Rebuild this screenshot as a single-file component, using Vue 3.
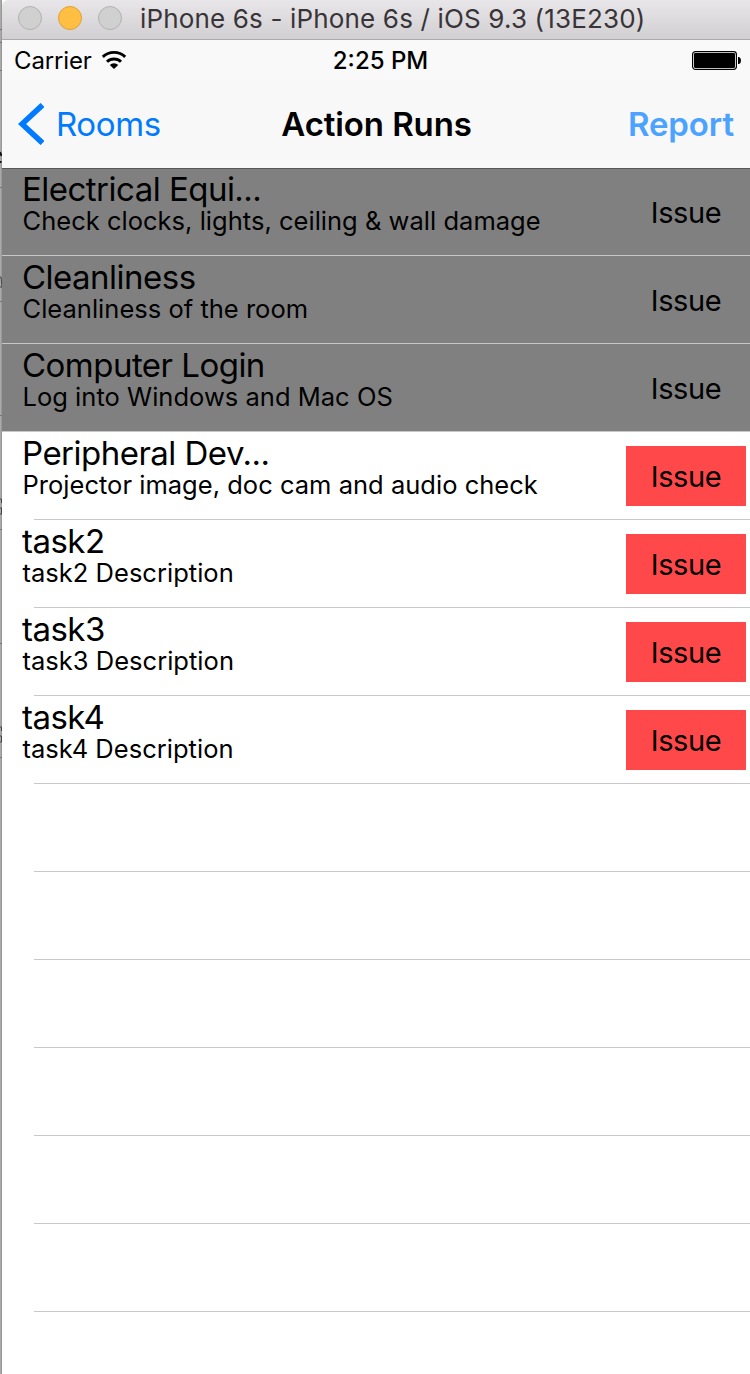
<script setup>
const tasks = [
  { title: 'Electrical Equi...', desc: 'Check clocks, lights, ceiling & wall damage', done: true },
  { title: 'Cleanliness', desc: 'Cleanliness of the room', done: true },
  { title: 'Computer Login', desc: 'Log into Windows and Mac OS', done: true },
  { title: 'Peripheral Dev...', desc: 'Projector image, doc cam and audio check', done: false },
  { title: 'task2', desc: 'task2 Description', done: false },
  { title: 'task3', desc: 'task3 Description', done: false },
  { title: 'task4', desc: 'task4 Description', done: false },
]
const emptyRows = 6
</script>

<template>
  <div class="screen">
    <div class="edge">
      <svg width="2" height="1374" viewBox="0 0 2 1374">
        <path d="M0 29.5h2M0 42.5h2M0 70.5h2M0 187.5h2M0 301.5h2M0 415.5h2M0 529.5h2M0 643.5h2M0 757.5h2" stroke="#777" />
        <path d="M0 152l1.500 4M0 162h1.500" stroke="#111" stroke-width="2" />
        <path d="M0 277h1l1 10h-2M0 499h1.500v4M0 508h1.500v6h-1.500M0 727h1.500v4M0 736h1.500v6h-1.500" stroke="#444" fill="none" />
      </svg>
    </div>
    <div class="window">
      <div class="titlebar">
        <i class="light"></i><i class="light amber"></i><i class="light"></i>
        <span class="wtitle">iPhone 6s - iPhone 6s / iOS 9.3 (13E230)</span>
      </div>
      <div class="status">
        <div class="side">
          <span class="carrier">Carrier</span>
          <svg class="wifi" width="26" height="20" viewBox="0 0 26 20">
            <path d="M1.800 6.900A16.200 16.200 0 0 1 24.200 6.900M6 11.800A10 10 0 0 1 20 11.800" fill="none" stroke="#000" stroke-width="2.900" />
            <path d="M13 19L8.800 15A6 6 0 0 1 17.200 15Z" fill="#000" />
          </svg>
        </div>
        <span class="clock">2:25 PM</span>
        <div class="side right">
          <svg class="battery" width="50" height="20" viewBox="0 0 50 20">
            <rect x="0.600" y="0.600" width="43.800" height="17.800" rx="2.800" fill="#fff" stroke="#000" stroke-width="1.200" />
            <rect x="2" y="2" width="41" height="15" rx="1.300" fill="#000" />
            <path d="M46 6h1q2 .5 2 3.500t-2 3.500h-1z" fill="#000" />
          </svg>
        </div>
      </div>
      <div class="nav">
        <div class="side">
          <svg class="chevron" width="26" height="42" viewBox="0 0 26 42">
            <path d="M24.500 2L4 21L24.500 40" fill="none" stroke="#007aff" stroke-width="5.600" />
          </svg>
          <span class="back">Rooms</span>
        </div>
        <span class="heading">Action Runs</span>
        <div class="side right"><span class="report">Report</span></div>
      </div>
      <div class="list">
        <div v-for="t in tasks" :key="t.title" class="row" :class="{ done: t.done }">
          <div class="texts">
            <div class="title">{{ t.title }}</div>
            <div class="desc">{{ t.desc }}</div>
          </div>
          <div class="issue">Issue</div>
        </div>
        <div v-for="n in emptyRows" :key="n" class="row"></div>
      </div>
    </div>
  </div>
</template>

<style>
body { margin: 0; background: #fff; }
</style>

<style scoped>
.screen {
  display: flex;
  width: 750px;
  height: 1374px;
  overflow: hidden;
  background: #fff;
  color: #000;
  font-family: Inter, "Liberation Sans", sans-serif;
  white-space: nowrap;
}
.edge {
  width: 2px;
  flex: none;
  background: linear-gradient(90deg, #b2b2b2, #909090);
}
.edge svg { display: block; }
.window { flex: 1; min-width: 0; background: #fff; }
.titlebar {
  display: flex;
  align-items: center;
  box-sizing: border-box;
  height: 40px;
  padding: 0 0 3px 16px;
  border-bottom: 1px solid #acaaac;
  border-top-left-radius: 6px;
  background: linear-gradient(#e8e6e8, #d1cfd1);
}
.light {
  box-sizing: border-box;
  width: 24px;
  height: 24px;
  margin-right: 16px;
  border: 1px solid #b1b2b1;
  border-radius: 50%;
  background: #d0d0d0;
}
.light.amber { border-color: #dfa039; background: #ffbf42; }
.wtitle { margin-left: 2px; font-size: 26px; color: #383438; letter-spacing: 0.160px; }
.status {
  display: flex;
  align-items: center;
  height: 40px;
  background: #f9f9f9;
}
.side { flex: 1 1 0; display: flex; align-items: center; box-sizing: border-box; }
.right { justify-content: flex-end; }
.status .side { padding-left: 12px; }
.carrier { font-size: 24px; letter-spacing: -0.150px; }
.status .wifi { margin-left: 9px; }
.status .right { padding: 0 8px 0 0; }
.clock { margin-left: 5px; font-size: 24px; font-weight: 500; }
.battery { display: block; margin-top: 2px; }
.nav {
  display: flex;
  align-items: center;
  box-sizing: border-box;
  height: 89px;
  background: #f8f8f8;
  border-bottom: 1px solid #58585a;
}
.nav .side { padding: 0 16px; }
.back { margin-left: 12px; font-size: 33px; color: #007aff; letter-spacing: -0.400px; }
.heading { margin-right: -1px; font-size: 33px; font-weight: 600; letter-spacing: -0.100px; }
.report { font-size: 33px; font-weight: 600; color: #4ca2ff; letter-spacing: -0.100px; }
.list { margin-top: -1px; }
.row {
  display: flex;
  justify-content: space-between;
  align-items: flex-start;
  box-sizing: border-box;
  height: 88px;
  padding: 0 4px 0 20px;
  background: linear-gradient(#c8c7cc, #c8c7cc) 32px 87px / 100% 1px no-repeat #fff;
}
.row.done { background: linear-gradient(#c8c7c8, #c8c7c8) 0 87px / 100% 1px no-repeat #808080; }
.row.done:first-child { box-shadow: inset 0 1px #58585a; }
.title { padding-top: 4px; font-size: 33px; line-height: 35px; letter-spacing: -0.520px; }
.desc { margin-left: 0.500px; font-size: 25.500px; line-height: 28px; letter-spacing: 0.020px; }
.issue {
  width: 120px;
  height: 60px;
  margin-top: 14px;
  font-size: 29px;
  line-height: 62px;
  letter-spacing: -0.400px;
  text-align: center;
  background: #ff484a;
}
.done .issue { background: transparent; }
</style>
